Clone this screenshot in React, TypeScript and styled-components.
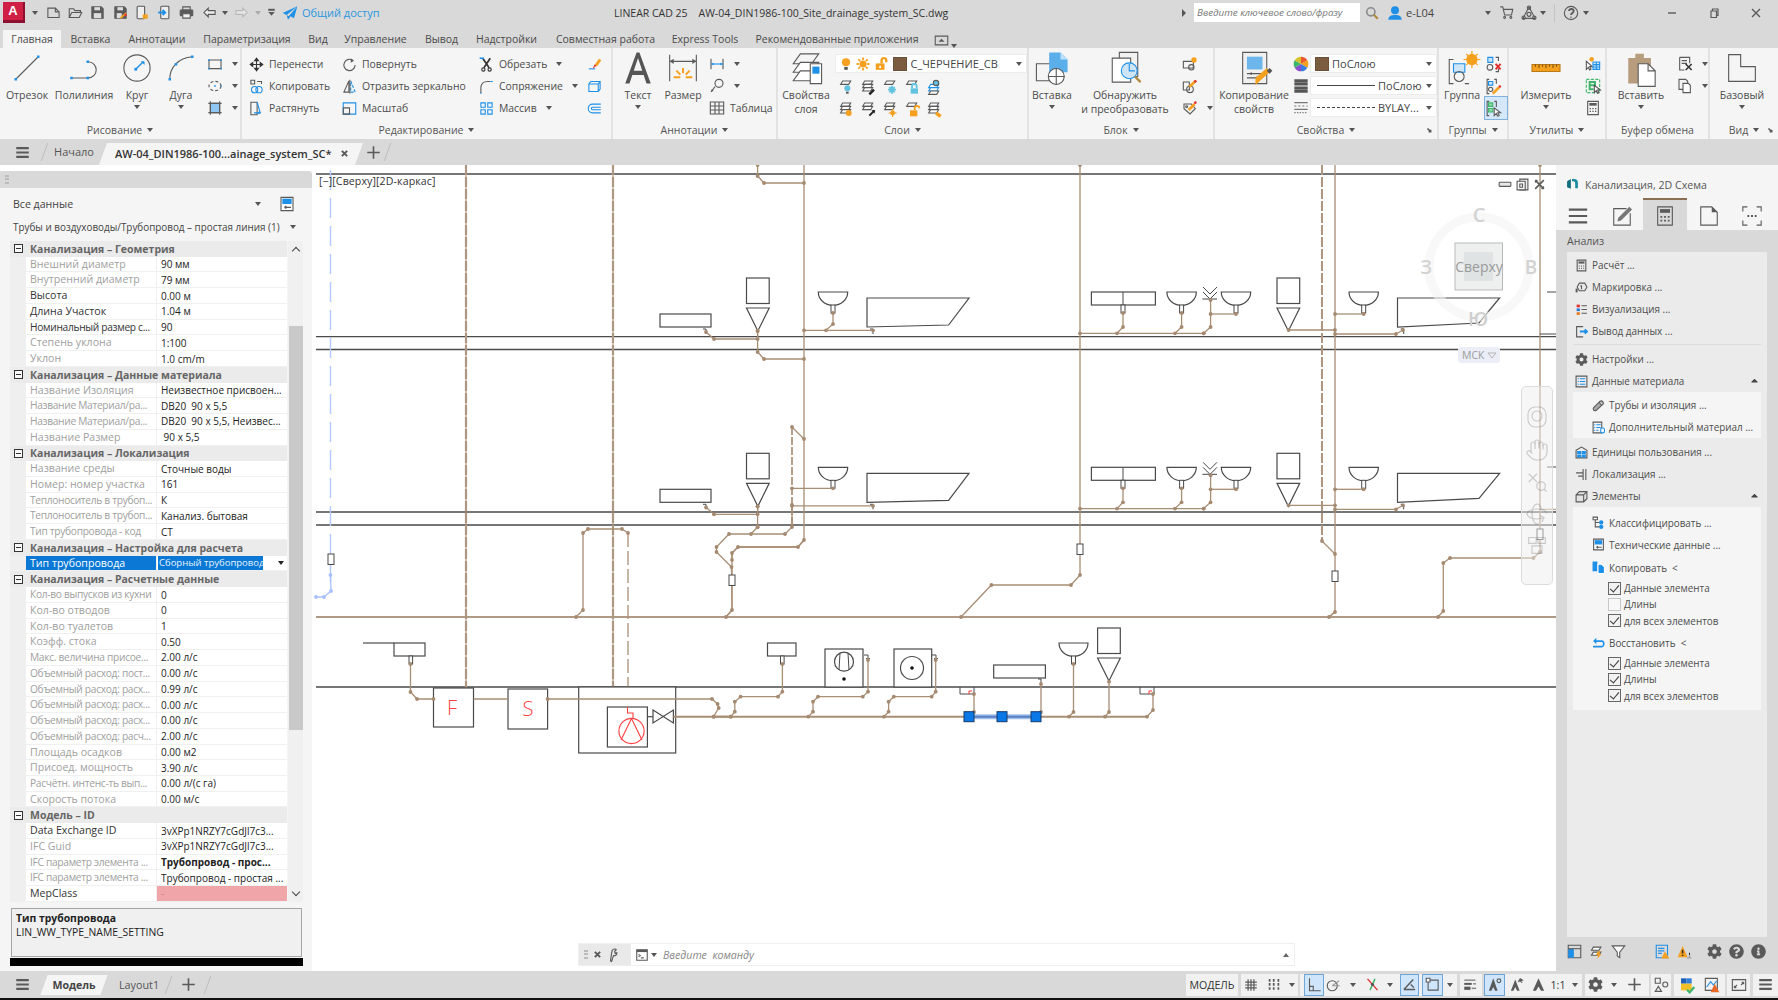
import React from 'react';
import styled, { createGlobalStyle } from 'styled-components';
import { FaCog, FaQuestionCircle, FaInfoCircle, FaCaretUp } from 'react-icons/fa';
import { Hand, Search, Rotate3d } from 'lucide-react';

const GlobalStyle = createGlobalStyle`
  html, body { margin: 0; padding: 0; width: 1778px; height: 1000px; overflow: hidden; background: #fff; }
  #root { width: 1778px; height: 1000px; }
  * { box-sizing: border-box; }
`;

const G = '#5a5a5a', B = '#1e90e8', O = '#f5a01e', LB = '#62c3e0', R = '#e03030', BR = '#a88e74', GN = '#3fb56a';
const sq = (x: number, y: number, c = B, s = 2.4) => <rect x={x - s / 2} y={y - s / 2} width={s} height={s} fill={c} stroke="none" />;
const layer = (y: number, c = G) => <path d={`M7 ${y}h12l-3 5H4z`} stroke={c} fill="#fff" />;

const icons: Record<string, React.ReactNode> = {
  new: <path d="M3 5h12l6 6v9H3z M15 5v6h6" />,
  open: <path d="M2 20V6h7l2 3h9v3 M2 20l4-8h16l-4 8z" />,
  save: <><path d="M3 3h15l3 3v15H3z" fill={G} /><rect x="7" y="3.5" width="9" height="5" fill="#ddd" stroke="none" /><rect x="6" y="13" width="12" height="8" fill="#ddd" stroke="none" /></>,
  saveas: <><path d="M3 3h15l3 3v15H3z" fill={G} /><rect x="7" y="3.5" width="9" height="5" fill="#ddd" stroke="none" /><rect x="6" y="13" width="8" height="8" fill="#ddd" stroke="none" /><path d="M13 22l9-8-2-2-9 8z" fill={O} stroke="none" /><circle cx="20" cy="16" r="2" fill={R} stroke="none" /></>,
  phone: <><rect x="5" y="2" width="12" height="20" rx="1.5" fill="#eee" /><path d="M14 15h8v7h-8z" fill={O} stroke="none" /></>,
  phonein: <><rect x="6" y="2" width="13" height="20" rx="1.5" fill="#eee" /><path d="M2 12h11m-4-4l4 4-4 4" stroke={B} strokeWidth="2" /></>,
  print: <><rect x="6" y="3" width="12" height="5" /><rect x="2" y="8" width="20" height="9" rx="1" fill={G} /><rect x="6" y="14" width="12" height="7" fill="#eee" /></>,
  undo: <path d="M10 5L3 12l7 7v-4h11V9H10z" fill="#eee" />,
  redo: <path d="M14 5l7 7-7 7v-4H3V9h11z" fill="#e6e6e6" stroke="#b9b9b9" />,
  caretbar: <><path d="M6 7h12" strokeWidth="2" /><path d="M6 11h12l-6 7z" fill={G} stroke="none" /></>,
  plane: <path d="M23 2L1 12l6 3 2 7 4-5 5 3z M7 15L23 2 10 17z" fill={B} stroke="none" />,
  search: <><circle cx="10" cy="10" r="7" stroke="#8a8a8a" strokeWidth="1.6" /><path d="M15 15l7 7" stroke="#b08a40" strokeWidth="2.2" /></>,
  user: <><circle cx="12" cy="8" r="6" fill={B} stroke="none" /><path d="M2 22c0-5 4-7 10-7s10 2 10 7z" fill={B} stroke="none" /></>,
  cart: <><path d="M2 3h4l3 13h11l2-9H7" /><circle cx="9" cy="20" r="1.5" /><circle cx="19" cy="20" r="1.5" /></>,
  a360: <><path d="M12 3L3 20h18z" /><circle cx="12" cy="4" r="2.5" /><circle cx="4" cy="19" r="2.5" /><circle cx="20" cy="19" r="2.5" /><circle cx="12" cy="14" r="3" /></>,
  help: <><circle cx="12" cy="12" r="10" /><path d="M9 9c0-4 7-4 7 0 0 3-4 3-4 6 M12 17.5v1.5" strokeWidth="1.8" /></>,
  winmin: <path d="M4 12h16" strokeWidth="1.4" />,
  winres: <path d="M6 8h11v13H6z M9 8V4h11v13h-3" strokeWidth="1.2" />,
  winclose: <path d="M4 4l16 16M20 4L4 20" strokeWidth="1.4" />,
  cvmin: <rect x="2" y="9" width="20" height="7" rx="1" fill="#e8e8e8" />,
  cvres: <><rect x="7" y="2" width="15" height="20" fill="#eee" /><rect x="2" y="6" width="15" height="16" fill="#f5f5f5" /><rect x="7" y="11" width="5" height="6" /></>,
  cvclose: <path d="M4 4l16 16M20 4L4 20M4 8l4-4M16 20l4-4" strokeWidth="1.6" />,
  tabbox: <><rect x="2" y="5" width="20" height="14" /><path d="M7 14l5-5 5 5z" fill={G} stroke="none" /></>,
  line: <><path d="M3 21L21 3" />{sq(3, 21, B, 2)}{sq(21, 3, B, 2)}</>,
  pline: <><path d="M2 20H15C24 20 24 7 15 7" />{sq(2, 20, B, 2)}{sq(15, 20, B, 2)}{sq(15, 7, B, 2)}</>,
  circ: <><circle cx="12" cy="12" r="10.5" /><path d="M11 13l6-6" stroke={B} strokeWidth="1.4" />{sq(11, 13, B, 2.2)}<path d="M15 6.5h3v3z" fill={B} stroke="none" /></>,
  arc: <><path d="M3 21C3 11 10 4 21 3" />{sq(3, 21, B, 2)}{sq(8, 9, B, 2)}{sq(21, 3, B, 2)}</>,
  rect: <><rect x="3" y="6" width="18" height="13" />{sq(3, 6, B)}{sq(21, 6, B)}{sq(21, 19, B)}{sq(3, 19, B)}</>,
  ellipse: <><ellipse cx="12" cy="12" rx="9" ry="7" strokeDasharray="3 2" />{sq(12, 12, B, 2.4)}{sq(21, 12, B, 2)}</>,
  hatch: <><rect x="5" y="5" width="14" height="14" fill="#8fc6f2" /><path d="M5 2v20M19 2v20M2 5h20M2 19h20" /></>,
  move: <path d="M12 2v20M2 12h20M12 2l-3 4h6zM12 22l-3-4h6zM2 12l4-3v6zM22 12l-4-3v6z" fill="#333" stroke="#333" />,
  rotate: <><path d="M18 6a9 9 0 1 0 3 7" /><path d="M14 2l5 4-5 3z" fill={G} stroke="none" /></>,
  copy: <><rect x="3" y="2" width="6" height="6" /><path d="M13 4h7v4" /><circle cx="9" cy="17" r="5" stroke={B} /><circle cx="16" cy="17" r="5" stroke={B} /></>,
  mirror: <><path d="M11 3v18H3z" /><path d="M14 3l7 18h-7z" strokeDasharray="3 1.5" stroke={B} /><path d="M12.5 1v22" /></>,
  stretch: <><path d="M3 2h10v20H3z" /><path d="M13 2l5 17H8" stroke={B} /><path d="M14 21l5-2-3-3z" fill={B} stroke="none" /></>,
  scale: <><rect x="2" y="3" width="20" height="18" stroke={B} /><rect x="2" y="11" width="10" height="10" /></>,
  trim: <><path d="M6 2l10 15M18 2L8 17" strokeWidth="1.8" stroke="#333" /><circle cx="7" cy="20" r="2.6" stroke="#333" /><circle cx="17" cy="20" r="2.6" stroke="#333" /><path d="M1 2h7" stroke={B} strokeWidth="1.6" /></>,
  fillet: <><path d="M3 23v-9C3 8 7 4 14 4h4" /><path d="M18 4h4M3 23v-2" stroke={B} /></>,
  array: <><rect x="3" y="3" width="7" height="7" stroke={B} /><rect x="14" y="3" width="7" height="7" stroke={B} /><rect x="3" y="14" width="7" height="7" stroke={B} /><rect x="14" y="14" width="7" height="7" stroke={B} /></>,
  erase: <><path d="M14 14l7-10" stroke={O} strokeWidth="3" /><path d="M3 19h10" stroke={B} /><path d="M9 19l6-5-3-2z" fill={R} stroke="none" /></>,
  cube3: <path d="M3 8l3-4h15v12l-3 4H3z M3 8h15v12 M18 8l3-4" stroke={B} />,
  offset: <path d="M22 5H9a7 7 0 0 0 0 14h13 M22 10H9a2 2 0 0 0 0 4h13" stroke={B} />,
  text: <path d="M3 23L11 1h2l8 22h-3l-2-6H8l-2 6z M9 14h6l-3-9z" fill="#555" stroke="none" />,
  dim: <><path d="M2 2v20M22 2v20M2 7h20" /><path d="M2 7l3-2v4zM22 7l-3-2v4z" fill={G} stroke="none" /><path d="M12 12v4M7 14l3 3M17 14l-3 3M5 19h5M14 19h5" stroke={O} strokeWidth="2" /></>,
  dimlin: <><path d="M3 4v16M21 4v16" /><path d="M3 12h18" stroke={B} /><path d="M3 12l4-2v4zM21 12l-4-2v4z" fill={B} stroke="none" /></>,
  leader: <><path d="M3 21l6-8" /><path d="M3 21l1-4 3 2z" fill={G} stroke="none" /><circle cx="15" cy="8" r="6" /></>,
  table: <><rect x="2" y="3" width="20" height="18" /><path d="M2 9h20M2 15h20M9 3v18M15 3v18" /></>,
  layerprops: <><path d="M8 2h13l-5 7H3z" /><path d="M8 8h13l-5 7H3z" fill="#fff" /><path d="M8 14h13l-5 7H3z" fill="#fff" /><rect x="15" y="9" width="8" height="14" fill="#fff" stroke={G} /><rect x="16.5" y="11" width="5" height="5" fill={B} stroke="none" /></>,
  bulb: <><circle cx="12" cy="9" r="7" fill={O} stroke="none" /><rect x="9" y="17" width="6" height="5" fill={G} stroke="none" /></>,
  sun: <><circle cx="12" cy="12" r="6" fill={O} stroke="none" /><path d="M12 1v4M12 19v4M1 12h4M19 12h4M4 4l3 3M17 17l3 3M4 20l3-3M17 7l3-3" stroke={O} strokeWidth="1.8" /></>,
  lockopen: <><rect x="3" y="11" width="15" height="11" fill={O} stroke="none" /><path d="M13 11V6a4 4 0 0 1 8 0v3" stroke={O} strokeWidth="2.4" /><rect x="9" y="15" width="3" height="4" fill="#fff" stroke="none" /></>,
  l1: <>{layer(3)}<circle cx="14" cy="14" r="4.5" fill={LB} stroke="none" /><rect x="12" y="19" width="4" height="3" fill={G} stroke="none" /></>,
  l2: <>{layer(3)}{layer(8)}{layer(13)}<path d="M14 23l7-7" stroke="#222" strokeWidth="2.4" /></>,
  l3: <>{layer(3)}<path d="M15 10v12M9 16h12M11 12l8 8M19 12l-8 8" stroke={LB} strokeWidth="1.8" /></>,
  l4: <>{layer(3)}<rect x="10" y="14" width="11" height="8" fill={LB} stroke="none" /><path d="M12 14v-3a3.5 3.5 0 0 1 7 0v3" stroke={LB} strokeWidth="1.8" /></>,
  l5: <>{layer(8, B)}{layer(13, B)}{layer(18, G)}<circle cx="15" cy="6" r="4" fill={LB} stroke={G} /></>,
  l6: <>{layer(3)}{layer(8)}{layer(13)}<circle cx="16" cy="18" r="4.5" fill={O} stroke="none" /></>,
  l7: <>{layer(3)}{layer(8)}<path d="M14 22l8-8" stroke="#222" strokeWidth="2" /><path d="M22 14v5l-5-5z" fill="#222" stroke="none" /></>,
  l8: <>{layer(3)}{layer(8)}<circle cx="16" cy="18" r="3.6" fill={O} stroke="none" /><path d="M16 12v12M10 18h12" stroke={O} /></>,
  l9: <>{layer(3)}<rect x="9" y="14" width="11" height="9" fill={O} stroke="none" /><path d="M16 14v-3a3.5 3.5 0 0 1 7 0" stroke={O} strokeWidth="1.8" /></>,
  l10: <>{layer(3)}{layer(8)}{layer(13)}<path d="M15 18l7 5" stroke={O} strokeWidth="3.4" /></>,
  insert: <><rect x="1" y="9" width="17" height="12" /><path d="M10 1h8l5 5v9H10z" fill="#5aaeea" stroke="none" /><path d="M18 1l5 5h-5z" fill="#bde0fa" stroke="none" /><circle cx="15" cy="18" r="5.6" fill="#fff" /><path d="M15 12v12M9.5 18H21" /></>,
  detect: <><path d="M8 1h13v17H8z" fill="#f2f2f2" /><path d="M3 5h13v17H3z" fill="#fff" /><circle cx="15" cy="14" r="5.6" fill="#cfe6f9" stroke={B} /><path d="M15 9v5h4" stroke={B} /><path d="M19 18l4 4" stroke="#b08a40" strokeWidth="2.4" /></>,
  bl1: <><rect x="2" y="8" width="15" height="10" /><circle cx="14" cy="17" r="4" /><circle cx="18" cy="6" r="4" fill={O} stroke="none" /></>,
  bl2: <><path d="M2 6h9v12H2z" /><circle cx="12" cy="17" r="5" /><path d="M11 13l9-8" stroke={O} strokeWidth="2.6" /><circle cx="20" cy="5" r="2" fill={R} stroke="none" /></>,
  bl3: <><path d="M3 6h11l6 7-8 8-9-8z" /><circle cx="7" cy="10" r="1.4" /><path d="M10 15l9-9" stroke={O} strokeWidth="2.6" /><circle cx="20" cy="4" r="2" fill={R} stroke="none" /></>,
  match: <><rect x="4" y="1" width="17" height="22" fill="#f0f0f0" /><rect x="7" y="4" width="11" height="9" fill="#6cb6ec" stroke="none" /><path d="M7 16h10M7 19h10M10 15v2M14 18v2" /><path d="M13 24l10-9-2-3-8 7z" fill={O} stroke="none" /><path d="M22 13l2 2" stroke="#555" strokeWidth="4" /></>,
  palette: <><path d="M12 12V1a11 11 0 0 1 9.5 5.5z" fill="#e8572d" stroke="none" /><path d="M12 12l9.5-5.5A11 11 0 0 1 21.5 17.5z" fill="#f5a01e" stroke="none" /><path d="M12 12l9.5 5.5A11 11 0 0 1 12 23z" fill="#3b7be0" stroke="none" /><path d="M12 12v11A11 11 0 0 1 2.5 17.5z" fill="#8a4dd0" stroke="none" /><path d="M12 12L2.5 17.5a11 11 0 0 1 0-11z" fill="#3fb56a" stroke="none" /><path d="M12 12L2.5 6.5A11 11 0 0 1 12 1z" fill="#d6c22a" stroke="none" /></>,
  lw: <path d="M2 4h20M2 9h20M2 15h20M2 20h20" strokeWidth="3" stroke="#555" />,
  lt: <path d="M2 4h20M2 9h3m3 0h3m3 0h3m3 0h2M2 14h20M2 19h2m2 0h2m2 0h2m2 0h2m2 0h2" stroke="#777" />,
  group: <><path d="M6 6H3v17h3 M14 6h3M14 23h3" /><rect x="6" y="9" width="8" height="6" stroke={B} fill="#cfe6f9" /><circle cx="10" cy="18" r="3.5" /><circle cx="19" cy="6" r="4" fill={O} stroke="none" /><path d="M19 0v12M13 6h12M15 2l8 8M23 2l-8 8" stroke={O} strokeWidth="1.2" /></>,
  g1: <><rect x="4" y="2" width="7" height="7" fill="#cfe6f9" stroke={B} /><circle cx="7" cy="16" r="4" /><path d="M15 2h4v5M15 22h4v-4" /><path d="M15 11l7 8M22 11l-7 8" stroke={R} strokeWidth="2" /></>,
  g2: <><path d="M6 2H3v20h3M13 2h3v6" /><rect x="5" y="5" width="6" height="5" fill="#cfe6f9" stroke={B} /><circle cx="8" cy="16" r="3" /><path d="M11 22l9-9" stroke={O} strokeWidth="2.6" /><circle cx="21" cy="12" r="1.8" fill={R} stroke="none" /></>,
  g3: <><path d="M6 2H3v20h3M13 2h3v8" /><rect x="5" y="4" width="6" height="5" fill="#8fd8a8" stroke={GN} /><rect x="5" y="12" width="6" height="5" fill="#8fd8a8" stroke={GN} /><path d="M13 11v11l3-3 2 4 2-1-2-4h4z" fill="#fff" /></>,
  ruler: <><rect x="0" y="9" width="24" height="6" fill="#f5a01e" stroke="#b87a14" /><path d="M3 9v2M6 9v3M9 9v2M12 9v3M15 9v2M18 9v3M21 9v2" stroke="#7a5214" /></>,
  u1: <><path d="M2 8v12l3-3 2 4 2-1-2-4h4z" fill="#fff" /><rect x="12" y="9" width="10" height="11" fill="#cfe6f9" stroke={B} /><path d="M12 13h10M12 16.5h10M17 9v11" stroke={B} /><circle cx="10" cy="5" r="3.4" fill={O} stroke="none" /></>,
  u2: <><rect x="2" y="2" width="20" height="20" stroke={GN} strokeDasharray="3 1.5" /><path d="M7 6h8v5H7z M7 11v6h6" stroke={GN} strokeWidth="2" /><path d="M14 11v11l3-3 2 4 2-1-2-4h4z" fill="#fff" /></>,
  calc: <><rect x="4" y="2" width="16" height="20" /><rect x="6.5" y="4.5" width="11" height="4" fill={G} stroke="none" /><path d="M7 12h2v2H7zM11 12h2v2h-2zM15 12h2v2h-2zM7 16h2v2H7zM11 16h2v2h-2zM15 16h2v2h-2z" fill={G} stroke="none" /></>,
  paste: <><path d="M3 5h5V2h6v3h5v18H3z" fill="#b79c7d" stroke="none" /><path d="M10 9h7l5 5v11H10z" fill="#fff" stroke={G} /><path d="M17 9v5h5" /></>,
  cut: <><path d="M4 2h15v9 M4 2v19h7 M7 7h8M7 11h8" /><path d="M13 12l9 9M22 12l-9 9" stroke="#333" strokeWidth="1.6" /></>,
  pages: <><path d="M3 2h10l3 3v12H3z" /><path d="M9 8h8l3 3v11H9z" fill="#fff" /></>,
  base: <path d="M2 2h9v9h11v11H2z" />,
  corner: <path d="M5 5l11 11M16 9v7H9" strokeWidth="1.6" />,
  file: <><path d="M3 2h12l6 6v14H3z" /><path d="M15 2l6 6h-6z" fill={G} stroke="none" /></>,
  burger: <path d="M2 5h20M2 12h20M2 19h20" strokeWidth="2.2" />,
  edit: <><path d="M17 4H3v18h18V9" /><path d="M7 18l1-4L20 2l3 3L11 17z" fill="#777" stroke="none" /></>,
  dots: <><path d="M2 7V2h5M17 2h5v5M2 17v5h5M17 22h5v-5" /><path d="M7 12h2M11 12h2M15 12h2" strokeWidth="2" /></>,
  brand: <><path d="M2 6l7-4v18l-7-3z" fill="#0f6e7e" stroke="none" /><path d="M11 2h4c5 0 7 3 7 7v10h-5V9c0-2-2-3-6-3z" fill="#1a8ba0" stroke="none" /></>,
  hex: <><path d="M4 11l4-7h10l4 7-4 7H8z" /><path d="M12 8l-2 2M12 8v7" /><path d="M3 14v7" strokeWidth="2" /></>,
  viz: <><path d="M3 3h6v5H3z" fill={R} stroke="none" /><path d="M3 10h6v5H3z" fill="#2979e0" stroke="none" /><path d="M3 17h6v5H3z" fill="#e87a20" stroke="none" /><path d="M12 5h10M12 12h10M12 19h10" /></>,
  export: <><path d="M15 3H3v19h12" /><path d="M9 12h13m-4-4l4 4-4 4" stroke={B} strokeWidth="2" /></>,
  list: <><rect x="2" y="2" width="20" height="20" /><path d="M9 7h10M9 12h10M9 17h10" stroke={B} /><path d="M5 6h2v2H5zM5 11h2v2H5zM5 16h2v2H5z" fill={B} stroke="none" /></>,
  pipe: <path d="M3 16L15 4c4-2 8 3 5 6L8 21c-5 2-7-2-5-5z M15 4c-2 3 1 8 5 6" fill="#aaa" />,
  addmat: <><rect x="2" y="2" width="16" height="20" /><path d="M8 7h8M8 12h8M8 17h4" stroke={B} /><path d="M4 6h2v2H4zM4 11h2v2H4zM4 16h2v2H4z" fill={B} stroke="none" /><rect x="16" y="13" width="7" height="9" rx="3" fill="#fff" stroke={B} /></>,
  units: <><path d="M2 8l10-6 10 6v14H2z" fill="#eee" /><path d="M4 9h7.5v6H4zM12.5 9H20v6h-7.5zM4 16h7.5v5H4zM12.5 16H20v5h-7.5z" fill={B} stroke="none" /></>,
  loc: <path d="M15 2v20M20 2v20M2 9h13M6 15h9" />,
  cube: <path d="M2 9l6-6h14v13l-6 6H2z M2 9h14v13 M16 9l6-6" fill="#e3e3e3" />,
  classify: <><rect x="2" y="2" width="8" height="5" fill="#fff" /><path d="M6 7v13h8M6 12h8" /><circle cx="17" cy="12" r="4" fill={B} stroke="none" /><circle cx="17" cy="20" r="4" fill={B} stroke="none" /></>,
  tech: <><rect x="3" y="2" width="18" height="20" fill="#fff" /><rect x="5" y="4" width="14" height="8" fill={B} stroke="none" /><path d="M8 17h10M8 17l3-2M8 17l3 2" /></>,
  copyb: <><path d="M1 1h9v18H1z" fill={B} stroke="none" /><path d="M11 6h7l5 5v12H11z" fill={B} stroke="#fff" /></>,
  restore: <path d="M8 3L2 9l6 6v-4h10c3 0 3 7 0 7H2v3h16c7 0 7-13 0-13H8z" fill={B} stroke="none" />,
  panelL: <><rect x="2" y="2" width="20" height="20" /><rect x="2" y="8" width="9" height="14" fill={B} stroke="none" /><path d="M2 7.5h20" /></>,
  layersFlash: <>{layer(5)}{layer(13)}<path d="M14 12l-3 6h4l-2 6 7-8h-4l3-5z" fill={O} stroke="none" /></>,
  filter: <path d="M2 3h20l-8 10v9l-4-3v-6z" fill="#fff" />,
  warnlist: <><rect x="2" y="2" width="18" height="20" stroke={B} /><path d="M5 7h10M5 11h10M5 15h6" stroke={B} /><path d="M16 12l7 11H10z" fill={O} stroke="none" /></>,
  warn: <><path d="M9 3l8 18H1z" fill={O} stroke="none" /><path d="M9 9v6M9 17v2" stroke="#333" strokeWidth="1.6" /><path d="M20 14v4M20 20v1" stroke="#333" /><path d="M16 22h7" stroke="#b0b0b0" strokeWidth="2" /></>,
  grid: <path d="M7 2v20M12 2v20M17 2v20M2 7h20M2 12h20M2 17h20" strokeWidth="1.2" />,
  snap: <path d="M3 4h3M10 4h3M18 4h3M3 11h3M10 11h3M18 11h3M3 18h3M10 18h3M18 18h3" strokeWidth="2.6" />,
  ortho: <path d="M4 2v20h18M4 15h6v7" />,
  polar: <><circle cx="10" cy="14" r="8" /><path d="M10 14l11-8M10 14h12" stroke="#999" /></>,
  osnap: <><path d="M4 3l16 18" stroke={R} strokeWidth="1.4" /><path d="M16 3L8 21" stroke={GN} strokeWidth="1.4" /><circle cx="12" cy="12" r="2.5" fill="#555" stroke="none" /></>,
  angle: <path d="M3 20h18M3 20L18 4M14 12l5 5" strokeWidth="1.4" />,
  rectdot: <><rect x="5" y="5" width="16" height="16" /><rect x="2" y="2" width="6" height="6" fill="#fff" /></>,
  lwt: <><path d="M2 5h18" strokeWidth="1" /><path d="M2 11h12" strokeWidth="2" /><path d="M2 18h10" strokeWidth="3.2" /><path d="M16 11h5M14 18h7" strokeWidth="1" /></>,
  anno: <><path d="M10 2L3 22h4l3-6 3 6h4z" fill={G} stroke="none" /><circle cx="19" cy="6" r="3" /></>,
  anno2: <><path d="M10 4L3 22h4l3-6 3 6h4z" fill={G} stroke="none" /><path d="M15 8l3-5 3 2-3 1 3 3" stroke={G} strokeWidth="1.4" /></>,
  anno3: <path d="M12 2L3 22h5l4-7 4 7h5z" fill={G} stroke="none" />,
  gear: <FaCog size={24} />,
  q: <FaQuestionCircle size={24} />,
  info: <FaInfoCircle size={24} />,
  plus: <path d="M12 2v20M2 12h20" strokeWidth="1.6" />,
  iso: <><rect x="2" y="2" width="8" height="8" /><circle cx="18" cy="12" r="4" /><path d="M7 15l5 8H2z" /></>,
  sheetok: <><path d="M3 2h8v8H3z" fill="#1f5fb8" stroke="none" /><path d="M11 2h8v8h-8z" fill="#2f7fd8" stroke="none" /><path d="M3 10h16v10H3z" fill="#f2c029" stroke="none" /><path d="M12 19l4 4 7-8" stroke={GN} strokeWidth="2.2" /></>,
  sheetwarn: <><rect x="2" y="2" width="18" height="18" /><path d="M4 15l6-8 4 5 5-6" stroke={B} /><path d="M16 10l7 13H10z" fill="#e8682a" stroke="none" /></>,
  frame: <><rect x="2" y="4" width="20" height="16" /><path d="M5 16l4-4M5 16h3M5 16v-3M19 8l-4 4M19 8h-3M19 8v3" /></>,
  prompt: <><rect x="3" y="3" width="18" height="18" fill="#fff" /><rect x="3" y="3" width="18" height="4" fill={G} stroke="none" /><path d="M6 11l3 2-3 2M10 17h5" /></>,
  wrench: <path d="M6 22l2-14 1-4c2-3 6-3 7-1l-3 3 1 3 3-1c0 4-3 6-6 5l-3 10z" />,
  xbold: <path d="M5 5l14 14M19 5L5 19" strokeWidth="2" />,
  wheel: <><rect x="3" y="2" width="18" height="20" rx="7" /><circle cx="12" cy="11" r="5" /></>,
  hand: <Hand size={24} strokeWidth={1.2} />,
  zoomx: <><path d="M3 3l9 9M12 3l-9 9" /><Search size={14} x={10} y={10} strokeWidth={1.2} /></>,
  orbit: <Rotate3d size={24} strokeWidth={1.2} />,
  boxes: <><rect x="2" y="3" width="9" height="7" /><rect x="13" y="3" width="9" height="7" /><rect x="6" y="13" width="12" height="9" /></>
};

const IconSvg = styled.svg<{ $c?: string }>`
  display: block;
  flex: none;
  color: ${p => p.$c || G};
  overflow: visible;
  * { vector-effect: non-scaling-stroke; }
`;
const Ic = ({ n, s = 16, c }: { n: string; s?: number; c?: string }) => (
  <IconSvg $c={c} width={s} height={s} viewBox="0 0 24 24" fill="none" stroke={c || G} strokeWidth={1.1}>{icons[n]}</IconSvg>
);

const Caret = styled.span<{ $c?: string }>`
  display: inline-block; flex: none;
  width: 0; height: 0;
  border-left: 3.5px solid transparent; border-right: 3.5px solid transparent;
  border-top: 4px solid ${p => p.$c || '#555'};
`;

const Shell = styled.div`
  width: 1778px; height: 1000px; display: flex; flex-direction: column;
  font-family: "Open Sans", "Noto Sans", sans-serif; font-size: 10.5px; color: #444;
  background: #d9d9d9; overflow: hidden;
`;

/* ---- title ---- */
const TitleBar = styled.header`height: 28px; display: flex; align-items: center; background: #d9d9d9; flex: none; padding-bottom: 3px;`;
const QatGroup = styled.div`width: 614px; display: flex; align-items: center; flex: none;`;
const Logo = styled.div`
  width: 22px; height: 21px; margin: 0 3px; background: #cf1f45; border-bottom: 3px solid #8d1030; border-right: 2px solid #8d1030;
  color: #fff; font: 700 13px/18px "Liberation Sans", sans-serif; text-align: center; flex: none;
`;
const QatSlot = styled.span<{ $w: number }>`width: ${p => p.$w}px; display: flex; justify-content: center; align-items: center; flex: none;`;
const ShareLink = styled.span`color: #2a97df; font-size: 11px; margin-left: 4px; white-space: nowrap;`;
const DocTitle = styled.div`width: 566px; flex: none; font-size: 10.5px; color: #333; white-space: pre;`;
const SearchBox = styled.div`
  width: 166px; height: 19px; background: #fff; margin-left: 6px; flex: none; padding-left: 3px;
  font-style: italic; font-size: 9.8px; line-height: 19px; color: #777; white-space: nowrap; overflow: hidden;
`;
const UserName = styled.span`width: 80px; font-size: 11px; color: #444; flex: none;`;
const VBar = styled.span`width: 1px; height: 18px; background: #c4c4c4; flex: none;`;
const Tri = styled.span`width: 0; height: 0; border-top: 4px solid transparent; border-bottom: 4px solid transparent; border-left: 4px solid #555; flex: none;`;

/* ---- tabs ---- */
const TabRow = styled.nav`height: 20px; display: flex; padding-left: 3px; flex: none; align-items: flex-end;`;
const RibbonTab = styled.span<{ $w: number; $on?: boolean }>`
  width: ${p => p.$w}px; height: ${p => p.$on ? 18 : 20}px; line-height: ${p => p.$on ? 18 : 22}px; text-align: center; font-size: 10.5px; color: #4a4a4a; white-space: nowrap; flex: none;
  background: ${p => p.$on ? '#f5f5f5' : 'transparent'};
`;

/* ---- ribbon ---- */
const Ribbon = styled.div`height: 91px; display: flex; background: #f5f5f5; flex: none;`;
const Panel = styled.section<{ $w: number }>`
  width: ${p => p.$w}px; flex: none; display: flex; flex-direction: column; border-right: 2px solid #e2e2e2; position: relative;
  &:last-child { border-right: none; }
`;
const PanelBody = styled.div`height: 73px; display: flex; flex: none;`;
const PanelFoot = styled.div`
  height: 18px; display: flex; align-items: center; justify-content: center; gap: 5px; color: #555; font-size: 10.5px; position: relative;
`;
const CornerMark = styled.span`position: absolute; right: 4px; top: 6px;`;
const Large = styled.div<{ $w: number }>`
  width: ${p => p.$w}px; flex: none; display: flex; flex-direction: column; align-items: center; color: #4c4c4c; font-size: 10.5px; line-height: 14px; text-align: center; white-space: nowrap;
`;
const LargeIcon = styled.div`height: 40px; display: flex; align-items: center; justify-content: center; flex: none;`;
const LargeCaret = styled(Caret)`margin-top: 3px;`;
const Stack = styled.div<{ $w: number; $pad?: number }>`
  width: ${p => p.$w}px; flex: none; padding: 5px 0 0 ${p => p.$pad ?? 0}px; display: flex; flex-direction: column;
`;
const Small = styled.div<{ $on?: boolean }>`
  height: 22px; display: flex; align-items: center; gap: 5px; white-space: nowrap; color: #4c4c4c; font-size: 10.4px;
  background: ${p => p.$on ? '#d4e8fa' : 'transparent'};
  outline: ${p => p.$on ? '1px solid #7fb2de' : 'none'};
`;
const SmallGapCaret = styled(Caret)<{ $ml?: number }>`margin-left: ${p => p.$ml ?? 4}px;`;
const LayerCol = styled.div`width: 192px; flex: none; margin-left: 1px; padding-top: 6px;`;
const Combo = styled.div<{ $w: number }>`
  width: ${p => p.$w}px; height: 19px; background: #fff; border: 1px solid #ececec; display: flex; align-items: center; padding: 0 4px; gap: 3px; font-size: 11px; color: #444; white-space: nowrap; overflow: hidden; flex: none;
`;
const LayerCombo = styled(Combo)`padding: 0 4px 0 1px; gap: 0;`;
const LayerStateCell = styled.span`width: 17.5px; display: flex; justify-content: center; flex: none;`;
const Swatch = styled.span`width: 14px; height: 14px; background: #7a5c3e; border: 1px solid #6b5136; flex: none;`;
const LayerSwatch = styled(Swatch)`margin: 0 4px 0 3px;`;
const ComboText = styled.span`flex: 1; overflow: hidden; white-space: nowrap;`;
const IconRow = styled.div`display: flex; height: 22px; align-items: center; margin-top: 3px; margin-bottom: -3px;`;
const IconCell = styled.span`width: 22px; display: flex; justify-content: center; flex: none;`;
const PropCol = styled.div`width: 146px; flex: none; padding-top: 6px; display: flex; flex-direction: column; gap: 3px;`;
const PropRowR = styled.div`display: flex; align-items: center; gap: 1px;`;
const LinePreview = styled.span<{ $dash?: boolean }>`
  width: 58px; height: 0; border-top: 1px ${p => p.$dash ? 'dashed' : 'solid'} #444; flex: none; margin-left: 2px;
`;

/* ---- doc tabs ---- */
const DocBar = styled.div`height: 26px; display: flex; align-items: flex-end; background: #d9d9d9; flex: none; color: #555;`;
const BarSlot = styled.span<{ $w: number }>`width: ${p => p.$w}px; height: 100%; display: flex; align-items: center; justify-content: center; flex: none;`;
const SlashMark = styled.span`width: 1px; height: 18px; background: #bdbdbd; transform: skewX(-20deg); flex: none; align-self: center;`;
const StartTab = styled.span`width: 58px; text-align: center; font-size: 11px; color: #555; flex: none; line-height: 26px; height: 100%;`;
const ActiveDoc = styled.div`
  width: 256px; height: 22px; position: relative; display: flex; align-items: center; justify-content: space-between; padding: 0 10px 2px 12px; font-size: 11px; font-weight: 600; color: #333; flex: none; white-space: nowrap;
  &::before { content: ""; position: absolute; inset: 0; background: #f5f5f5; transform: skewX(-20deg); }
  > * { position: relative; }
`;

/* ---- main ---- */
const Main = styled.main`height: 806px; display: flex; flex: none; background: #fff;`;
const LeftPanel = styled.aside`width: 312px; flex: none; margin-top: 6px; display: flex; flex-direction: column; background: #f5f5f5;`;
const DragHead = styled.div`height: 17px; background: #d9d9d9; flex: none; border-radius: 0 4px 0 0; display: flex; align-items: center; padding-left: 5px;`;
const Grip = styled.span`width: 4px; height: 9px; border-left: 2px dotted #bbb; border-right: 2px dotted #bbb; flex: none;`;
const FilterRow = styled.div<{ $h: number; $fs?: number }>`height: ${p => p.$h}px; display: flex; align-items: center; padding-left: 13px; color: #444; font-size: ${p => p.$fs ?? 10.6}px; flex: none; white-space: nowrap;`;
const FilterLabel = styled.span<{ $w: number }>`width: ${p => p.$w}px; flex: none;`;
const FilterIcon = styled.span`margin-left: 18px; display: flex;`;
const GridWrap = styled.div`display: flex; flex: none; margin-left: 10px; height: 661px; width: 292px;`;
const PropGrid = styled.div`width: 277px; flex: none; background: #efefef;`;
const GroupHead = styled.div`height: 15.74px; background: #ebebeb; display: flex; align-items: center; font-weight: 700; font-size: 10.5px; color: #666; white-space: nowrap; padding-left: 4px; gap: 7px;`;
const Toggle = styled.span`width: 9px; height: 9px; border: 1px solid #333; position: relative; flex: none; background: #f8f8f8;
  &::after { content: ""; position: absolute; left: 1px; right: 1px; top: 3px; height: 1px; background: #333; }
`;
const PRow = styled.div`height: 15.74px; display: grid; grid-template-columns: 16px 130px 131px; border-bottom: 1.5px solid #f0f0f0;`;
const PLabel = styled.div<{ $dark?: boolean; $sel?: boolean; $tight?: boolean }>`
  grid-column: 2; background: ${p => p.$sel ? '#0a78d4' : '#fff'}; color: ${p => p.$sel ? '#fff' : p.$dark ? '#333' : '#a0a0a0'};
  padding-left: 4px; font-size: ${p => p.$tight ? 10.2 : 10.6}px; letter-spacing: ${p => p.$tight ? -0.3 : 0}px; line-height: 14px; white-space: nowrap; overflow: hidden;
`;
const PValue = styled.div<{ $bold?: boolean; $bad?: boolean }>`
  grid-column: 3; margin-left: 1px; background: ${p => p.$bad ? '#f0a5a8' : '#fff'}; color: ${p => p.$bad ? '#b88' : '#222'}; padding-left: 4px; font-size: 10px; line-height: 14px; font-weight: ${p => p.$bold ? 700 : 400}; white-space: pre; overflow: hidden; display: flex; align-items: center; justify-content: space-between;
`;
const SelText = styled.span`background: #0a78d4; color: #e8f4ff; margin-left: -3px; padding: 0 1px; flex: none; width: 105px; overflow: hidden; font-size: 9.5px;`;
const SelCaret = styled(Caret)`border-top-color: #222; margin-right: 3px;`;
const ScrollTrack = styled.div`width: 15px; margin-left: 1px; flex: none; position: relative; background: #f0f0f0; display: flex; flex-direction: column; align-items: center; justify-content: space-between; padding: 5px 0;`;
const ScrollThumb = styled.div`position: absolute; left: 1px; right: 0; top: 85px; height: 404px; background: #c9c9c9;`;
const Chevron = styled.span<{ $up?: boolean }>`
  width: 6px; height: 6px; border-left: 1.5px solid #444; border-top: 1.5px solid #444; z-index: 1;
  transform: translateY(${p => p.$up ? 2 : -2}px) rotate(${p => p.$up ? 45 : 225}deg);
`;
const Desc = styled.div`
  width: 291px; height: 49px; margin: 6px 0 0 11px; background: #f0f0f0; border: 1px solid #a5a5a5; flex: none; padding: 3px 4px; font-size: 10.4px; line-height: 13.5px; color: #222; white-space: nowrap;
`;
const DescTitle = styled.div`font-weight: 700;`;
const BlackBar = styled.div`width: 293px; height: 8px; margin: 1px 0 0 10px; background: #000; flex: none;`;

const Canvas = styled.div`flex: 1; position: relative; overflow: hidden; background: #fff;`;
const ViewLabel = styled.div`position: absolute; left: 7px; top: 10px; font-size: 10.6px; line-height: 13px; color: #333; letter-spacing: .1px; white-space: nowrap;`;
const WinCtrls = styled.div`position: absolute; left: 1186px; top: 12px; display: flex; gap: 4px; align-items: center;`;
const CubeBox = styled.div`position: absolute; left: 1105px; top: 40px; width: 124px; height: 160px;`;
const NavBar = styled.div`
  position: absolute; left: 1209px; top: 221px; width: 32px; height: 199px; background: rgba(238,238,238,.5); border: 1.5px solid #dcdcdc; border-radius: 5px;
  display: flex; flex-direction: column; align-items: center; gap: 9px; padding-top: 18px;
`;
const CmdLine = styled.div`position: absolute; left: 266px; top: 778px; width: 717px; height: 23px; background: #fff; border: 1px solid #efefef; display: flex; align-items: center;`;
const CmdHandle = styled.div`width: 52px; height: 100%; background: #e9e9e9; display: flex; align-items: center; gap: 5px; padding-left: 5px; flex: none;`;
const CmdPrompt = styled.div`display: flex; align-items: center; gap: 2px; padding-left: 4px; flex: none;`;
const CmdText = styled.span`font-style: italic; color: #888; font-size: 10.6px; margin-left: 6px; white-space: pre; flex: 1;`;
const CmdUp = styled.span`width: 0; height: 0; border-left: 3px solid transparent; border-right: 3px solid transparent; border-bottom: 4px solid #666; margin-right: 5px;`;

/* ---- right ---- */
const RightPanel = styled.aside`width: 222px; flex: none; display: flex; flex-direction: column; background: #d9d9d9;`;
const RHead = styled.div`height: 65px; background: #f5f5f5; flex: none; display: flex; flex-direction: column;`;
const RTitle = styled.div`height: 33px; display: flex; align-items: center; padding: 6px 0 0 10px; gap: 6px; font-size: 10.6px; color: #555; white-space: nowrap;`;
const RTabs = styled.div`height: 32px; display: flex;`;
const RTab = styled.span<{ $w: number; $on?: boolean }>`
  width: ${p => p.$w}px; flex: none; display: flex; align-items: center; justify-content: center; padding-top: 2px;
  background: ${p => p.$on ? '#d9d9d9' : 'transparent'}; border-top: 2px solid ${p => p.$on ? '#8a6f55' : 'transparent'};
`;
const RBody = styled.div`flex: 1; padding: 0 11px; display: flex; flex-direction: column;`;
const RHeading = styled.div`height: 22px; line-height: 23px; font-size: 10.6px; color: #555;`;
const RBox = styled.div`height: 685px; background: #ebebeb; flex: none; padding: 2px 6px 0; color: #4a4a4a;`;
const RItem = styled.div<{ $sub?: boolean; $gap?: number }>`
  height: 22px; display: flex; align-items: center; gap: 4px; font-size: 9.9px; white-space: pre; color: #4d4d4d; padding-left: ${p => p.$sub ? 19 : 2}px; margin-top: ${p => p.$gap ?? 0}px; position: relative;
`;
const RCollapse = styled.span`position: absolute; right: 1px; top: 5px; color: #444; display: flex;`;
const RSep = styled.div`height: 1px; background: #dcdcdc; margin: 2px 0 3px;`;
const RSub = styled.div<{ $pt: number; $pb: number }>`background: #f5f5f5; padding: ${p => p.$pt}px 0 ${p => p.$pb}px;`;
const RCheck = styled.div<{ $mt?: number }>`height: 16.3px; display: flex; align-items: center; gap: 3px; padding-left: 35px; font-size: 9.9px; color: #4d4d4d; white-space: nowrap; margin-top: ${p => p.$mt ?? 0}px;`;
const CheckBox = styled.span<{ $on?: boolean }>`
  width: 13px; height: 13px; flex: none; border: 1.5px solid #666; background: ${p => p.$on ? '#f2f2f2' : '#f8f8f8'}; border-color: ${p => p.$on ? '#666' : '#c8c8c8'}; position: relative;
  &::after { content: ""; display: ${p => p.$on ? 'block' : 'none'}; position: absolute; left: 3px; top: 0; width: 4px; height: 8px; border-right: 1.5px solid #333; border-bottom: 1.5px solid #333; transform: rotate(40deg); }
`;
const RFoot = styled.div`height: 28px; display: flex; align-items: center; flex: none;`;

/* ---- status ---- */
const StatusBar = styled.footer`height: 29px; flex: none; display: flex; border-bottom: 2px solid #111;`;
const ModelTabs = styled.div`width: 1186px; flex: none; display: flex; align-items: center;`;
const ActiveModel = styled.div`
  width: 60px; height: 20px; position: relative; display: flex; align-items: center; justify-content: center; font-weight: 700; font-size: 10.6px; color: #444; flex: none;
  &::before { content: ""; position: absolute; inset: 0; background: #f5f5f5; transform: skewX(-20deg); }
  > * { position: relative; }
`;
const LayoutTab = styled.span`width: 64px; padding-left: 6px; text-align: center; font-size: 10.8px; color: #555; flex: none;`;
const StGroups = styled.div`display: flex; gap: 2.5px; align-items: center;`;
const StGroup = styled.div`height: 22px; background: #f1f1f1; display: flex; align-items: center; flex: none;`;
const StSlot = styled.span<{ $w: number; $on?: boolean }>`
  width: ${p => p.$w}px; height: 22px; flex: none; display: flex; align-items: center; justify-content: center; font-size: 10.6px; color: #333;
  background: ${p => p.$on ? '#cfe5fb' : 'transparent'}; box-shadow: ${p => p.$on ? 'inset 0 0 0 1px #6ea6d9' : 'none'};
`;

/* ---- drawing ---- */
const Drawing = styled.svg`position: absolute; inset: 0; display: block;`;
const L = '#4a4a4a';
const Pipe = ({ p, w = 1.3, c = BR, dots = true }: { p: string; w?: number; c?: string; dots?: boolean }) => {
  const pts = p.trim().split(/\s+/).map(a => a.split(',').map(Number));
  return <g><polyline points={p} fill="none" stroke={c} strokeWidth={w} />{dots && pts.map((q, i) => <circle key={i} cx={q[0]} cy={q[1]} r={1.9} fill={c === BR ? '#a58a70' : c} />)}</g>;
};
const Basin = ({ cx, y = 292, hw = 14.7 }: { cx: number; y?: number; hw?: number }) => (
  <g fill="#fff" stroke={L} strokeWidth="1.2">
    <path d={`M${cx - hw} ${y}h${hw * 2}a${hw} 13.5 0 0 1 -${hw * 2} 0z`} />
    <rect x={cx - 2} y={y + 13} width={4} height={8} strokeWidth="1" />
  </g>
);
const Toilet = ({ x, y = 278 }: { x: number; y?: number }) => (
  <g fill="#fff" stroke={L} strokeWidth="1.2">
    <rect x={x} y={y} width={22.7} height={25.5} />
    <path d={`M${x} ${y + 30}h22.7l-11.35 23z`} />
  </g>
);
const Sym = ({ x, y }: { x: number; y: number }) => <rect x={x - 3} y={y - 5} width={6} height={10.5} fill="#fff" stroke={L} strokeWidth="1" />;
const Tick = ({ x, y }: { x: number; y: number }) => <path d={`M${x} ${y}v5 M${x} ${y}h-3`} stroke={L} fill="none" />;
const Elbow = ({ x }: { x: number }) => <g><path d={`M${x} 687v7h14v-7`} fill="none" stroke={L} /><path d={`M${x + 9} 694v-3h3`} stroke="#f33" fill="none" /></g>;

const Fixtures = () => (
  <g>
    <rect x="660" y="314" width="51" height="13" fill="#fff" stroke={L} strokeWidth="1.2" />
    <Tick x={706} y={329} />
    <Toilet x={746.5} />
    <Basin cx={833} />
    <path d="M867 298H969L948.6 325L867 327z" fill="#fff" stroke={L} strokeWidth="1.2" />
    <Tick x={873} y={329} />
    <rect x="1091.4" y="292" width="64" height="13" fill="#fff" stroke={L} strokeWidth="1.2" />
    <path d="M1123 292v21" stroke={L} />
    <rect x="1121" y="305" width="4" height="8" fill="#fff" stroke={L} />
    <Basin cx={1181.6} />
    <path d="M1203 287l7 7 7-7M1203 292l7 7 7-7M1202.4 299H1217" fill="none" stroke={L} />
    <Basin cx={1236} />
    <Toilet x={1277} />
    <Basin cx={1363.7} />
    <path d="M1397.5 298H1499.6L1479 323L1397.5 327z" fill="#fff" stroke={L} strokeWidth="1.2" />
    <Tick x={1403.7} y={329} />
    <Pipe p="706,332 714,339 757.6,339 757.6,331" />
    <Pipe p="1123,313 1123,327 1117,333.3" />
    <Pipe p="1080,333.3 1203.7,333.3" />
    <Pipe p="1181.6,313 1181.6,327 1175,333.3" />
    <Pipe p="1210.6,300 1210.6,327 1203.7,333.3" />
    <Pipe p="1210.6,314 1236,314" />
    <Pipe p="1288.6,330 1335,330" />
    <Pipe p="1363.7,314 1335,314" />
    <Pipe p="1403,330 1396,334 1335,334" />
  </g>
);
const FloorUpper = () => (
  <g>
    <Pipe p="757.6,165 757.6,176 764,183 804,183" />
    <Pipe p="757.6,331 757.6,352 764,359 804,359" />
    <Pipe p="833,313 833,324 826,330.3" />
    <Pipe p="804,330.3 873,330.3" />
    <path d="M1540 334H1558M1547 292H1556M1547 467H1556" stroke={L} fill="none" />
  </g>
);

const DrainDrawing = () => (
  <Drawing width="1244" height="806" viewBox="312 165 1244 806">
    <g stroke={L} strokeWidth="1.3">
      <path d="M316 174H1556M316 336.7H1556M316 349.5H1556M316 512H1556M316 525H1556M316 687H1556" />
    </g>
    <path d="M316 617H1556" stroke="#b09a85" strokeWidth="2" />
    <path d="M466 165V693M613 165V713" stroke={BR} strokeWidth="1" />
    <path d="M466 165V693M613 165V713" stroke="#ae9780" strokeWidth="2.2" strokeDasharray="10 2" />
    <path d="M330.5 170V591" stroke="#b4c9ff" strokeWidth="1.4" strokeDasharray="20 8" />
    <Pipe p="330.5,575 331,591 324,597 316,597" c="#a9c0ff" />
    <path d="M1322 165V541" stroke="#ae9780" strokeWidth="2" strokeDasharray="10 2" />
    <path d="M792 427V527" stroke="#ae9780" strokeWidth="1.8" strokeDasharray="8 2" />
    <path d="M628 533V707" stroke="#ae9780" strokeWidth="1.4" strokeDasharray="14 4" />
    <Pipe p="804,165 804,540 798,547 738,547 732,553 732,610 726,617" dots={false} />
    <Pipe p="804,540 798,547 738,547 732,553 732,560" />
    <Pipe p="792,427 804,439" />
    <Pipe p="792,505 792,527 785,534 729,534 716.5,547 716.5,552 731.5,567 732,610 726,617" />
    <Pipe p="757.6,527 751,534" />
    <Pipe p="576,617 583,610 583,533 588,529 622,529 628,533" />
    <Pipe p="1080,165 1080,575 1071,585 991.4,585 961,617" />
    <Pipe p="1335,165 1335,554 1335,612 1329,617" dots={false} />
    <Pipe p="1322,541 1335,554" />
    <Pipe p="1335,612 1329,617" />
    <Pipe p="1540,165 1540,552 1533.5,558 1450,558 1443.3,563 1443.3,611 1438,617" />
    <Sym x={331} y={559} />
    <Sym x={732} y={580} />
    <Sym x={1080} y={549} />
    <Sym x={1335} y={576} />
    <Sym x={1540} y={534} />
    <Fixtures />
    <FloorUpper />
    <g transform="translate(0 175.3)">
      <Fixtures />
      <Pipe p="757.6,331 757.6,352" />
      <path d="M1540 334H1558" stroke={BR} fill="none" />
      <Pipe p="833,313 792,313" />
      <Pipe p="792,330.5 873,330.5" />
    </g>
    <g fill="#fff" stroke={L} strokeWidth="1.2">
      <path d="M363 643H394" />
      <rect x="394" y="643" width="31" height="13" />
      <rect x="409" y="656" width="3.6" height="8" strokeWidth="1" />
      <rect x="767.5" y="643" width="28.5" height="13" />
      <rect x="780.5" y="656" width="3.6" height="8" strokeWidth="1" />
      <rect x="433.5" y="688" width="40" height="39" />
      <rect x="508" y="689" width="39.6" height="40" />
      <rect x="578.7" y="687" width="97" height="66" />
      <rect x="607.4" y="707" width="40" height="40" />
      <path d="M653 710L673.4 723V710L653 723z" />
      <path d="M647.5 716.7H653" fill="none" />
      <rect x="825" y="649" width="38" height="38" />
      <ellipse cx="844" cy="661.7" rx="9.5" ry="9.5" />
      <path d="M840 653l-1 17M848 653l1 17" fill="none" strokeWidth="1" />
      <rect x="894" y="649" width="37.7" height="38" />
      <ellipse cx="912" cy="668" rx="11.5" ry="11.5" />
      <rect x="993.7" y="665" width="51.7" height="13" />
      <path d="M864 655h4v5l2-2M868 660l-2-2M932 655h4v5l2-2M936 660l-2-2" fill="none" strokeWidth="1" />
    </g>
    <circle cx="844" cy="679" r="1.8" fill="#111" />
    <circle cx="912" cy="668" r="1.8" fill="#111" />
    <Basin cx={1073.5} y={643} hw={14.5} />
    <Toilet x={1097.6} y={628} />
    <Tick x={1041} y={679} />
    <Elbow x={960} />
    <Elbow x={1140} />
    <g fill="none" stroke="#ff4040" strokeWidth="1.1">
      <path d="M627.5 707V713H633V719" />
      <ellipse cx="631.5" cy="731" rx="12.6" ry="12.6" />
      <path d="M631.5 718.5L621 740M631.5 718.5L642 740" />
    </g>
    <text x="452" y="715" textAnchor="middle" fontFamily="Open Sans, sans-serif" fontWeight="300" fontSize="20" fill="#ff4040">F</text>
    <text x="528" y="716" textAnchor="middle" fontFamily="Open Sans, sans-serif" fontWeight="300" fontSize="20" fill="#ff4040">S</text>
    <Pipe p="410.5,664 410.5,692 417,699 433.5,699" />
    <path d="M473.6 699H508" stroke={BR} strokeWidth="1.3" />
    <Pipe p="547.6,699 712,699 717.6,704 718.7,708 713.6,716.7" />
    <Pipe p="673.4,716.7 1147,716.7" w={2} dots={false} />
    <Pipe p="713.6,716.7 730.8,716.7" w={2} />
    <Pipe p="730.8,716.7 734.8,711.7 734.8,701.7 740.6,696.7 778,696.7 782.4,691.7 782.4,664" />
    <Pipe p="808.3,716.7 813,711.7 813,701.7 818,696.7 862.8,696.7 868,691.7 868,660" />
    <Pipe p="884,716.7 888.6,711.7 888.6,701.7 893.8,696.7 931.7,696.7 935.7,691.7 935.7,660" />
    <Pipe p="974,694 974,712 969,716.7" />
    <Pipe p="1041,684 1041,712 1036,716.7" />
    <Pipe p="1073.5,664 1073.5,712 1069,716.7" />
    <Pipe p="1109,681.7 1109,712 1105,716.7" />
    <Pipe p="1153,694 1153,710 1147,716.7" />
    <path d="M969 716.7H1036" stroke="#9fc0ee" strokeWidth="5" />
    <path d="M969 716.7H1036" stroke="#5a7fc0" strokeWidth="2" />
    <g fill="#0a78e6" stroke="#123a6a" strokeWidth="1">
      <rect x="964" y="711.7" width="10" height="10" />
      <rect x="997" y="711.7" width="10" height="10" />
      <rect x="1031" y="711.7" width="10" height="10" />
    </g>
  </Drawing>
);

const ViewCube = () => (
  <CubeBox>
    <svg width="124" height="160" viewBox="1417 205 124 160" fontFamily="Open Sans, sans-serif">
      <circle cx="1479" cy="267" r="50" fill="none" stroke="#f4f4f4" strokeWidth="9" opacity=".6" />
      <rect x="1455" y="243" width="47.5" height="47" fill="#eef0f0" stroke="#b9b9b9" />
      <rect x="1464" y="252" width="29" height="29" fill="#dfe3e3" />
      <text x="1479" y="271.5" textAnchor="middle" fontSize="14" fill="#9a9a9a">Сверху</text>
      <text x="1479" y="222" textAnchor="middle" fontSize="20" fontWeight="600" fill="#d2d2d2">С</text>
      <text x="1531" y="274" textAnchor="middle" fontSize="19" fontWeight="600" fill="#d2d2d2">В</text>
      <text x="1426" y="274" textAnchor="middle" fontSize="19" fontWeight="600" fill="#d2d2d2">З</text>
      <text x="1478" y="326" textAnchor="middle" fontSize="19" fontWeight="600" fill="#cfcfcf">Ю</text>
      <rect x="1458" y="347" width="42" height="16" rx="3" fill="#eceef7" />
      <text x="1462" y="359" fontSize="10.5" fill="#9a9a9a">МСК</text>
      <path d="M1488 353h8l-4 5z" fill="none" stroke="#b5b5b5" />
    </svg>
  </CubeBox>
);

const Faint = styled.span`opacity: .28; display: flex;`;

const Ribbons = () => (
  <Ribbon>
    <Panel $w={242}>
      <PanelBody>
        <Large $w={54}><LargeIcon><Ic n="line" s={30} /></LargeIcon>Отрезок</Large>
        <Large $w={60}><LargeIcon><Ic n="pline" s={30} /></LargeIcon>Полилиния</Large>
        <Large $w={46}><LargeIcon><Ic n="circ" s={30} /></LargeIcon>Круг<LargeCaret /></Large>
        <Large $w={42}><LargeIcon><Ic n="arc" s={30} /></LargeIcon>Дуга<LargeCaret /></Large>
        <Stack $w={38} $pad={5}>
          <Small><Ic n="rect" s={16} /><SmallGapCaret /></Small>
          <Small><Ic n="ellipse" s={16} /><SmallGapCaret /></Small>
          <Small><Ic n="hatch" s={16} /><SmallGapCaret /></Small>
        </Stack>
      </PanelBody>
      <PanelFoot>Рисование<Caret /></PanelFoot>
    </Panel>
    <Panel $w={371}>
      <PanelBody>
        <Stack $w={100} $pad={7}>
          <Small><Ic n="move" s={15} />Перенести</Small>
          <Small><Ic n="copy" s={15} />Копировать</Small>
          <Small><Ic n="stretch" s={15} />Растянуть</Small>
        </Stack>
        <Stack $w={137}>
          <Small><Ic n="rotate" s={15} />Повернуть</Small>
          <Small><Ic n="mirror" s={15} />Отразить зеркально</Small>
          <Small><Ic n="scale" s={15} />Масштаб</Small>
        </Stack>
        <Stack $w={108}>
          <Small><Ic n="trim" s={15} />Обрезать<SmallGapCaret $ml={4} /></Small>
          <Small><Ic n="fillet" s={15} />Сопряжение<SmallGapCaret $ml={4} /></Small>
          <Small><Ic n="array" s={15} />Массив<SmallGapCaret $ml={4} /></Small>
        </Stack>
        <Stack $w={24}>
          <Small><Ic n="erase" s={15} /></Small>
          <Small><Ic n="cube3" s={15} /></Small>
          <Small><Ic n="offset" s={15} /></Small>
        </Stack>
      </PanelBody>
      <PanelFoot>Редактирование<Caret /></PanelFoot>
    </Panel>
    <Panel $w={165}>
      <PanelBody>
        <Large $w={50}><LargeIcon><Ic n="text" s={34} /></LargeIcon>Текст<LargeCaret /></Large>
        <Large $w={40}><LargeIcon><Ic n="dim" s={32} /></LargeIcon>Размер</Large>
        <Stack $w={70} $pad={6}>
          <Small><Ic n="dimlin" s={16} /><SmallGapCaret /></Small>
          <Small><Ic n="leader" s={16} /><SmallGapCaret /></Small>
          <Small><Ic n="table" s={16} />Таблица</Small>
        </Stack>
      </PanelBody>
      <PanelFoot>Аннотации<Caret /></PanelFoot>
    </Panel>
    <Panel $w={251}>
      <PanelBody>
        <Large $w={56}><LargeIcon><Ic n="layerprops" s={34} /></LargeIcon>Свойства<br />слоя</Large>
        <LayerCol>
          <LayerCombo $w={192}>
            <LayerStateCell><Ic n="bulb" s={14} /></LayerStateCell>
            <LayerStateCell><Ic n="sun" s={14} /></LayerStateCell>
            <LayerStateCell><Ic n="lockopen" s={14} /></LayerStateCell>
            <LayerSwatch />
            <ComboText>С_ЧЕРЧЕНИЕ_СВ</ComboText>
            <Caret />
          </LayerCombo>
          <IconRow>{['l1', 'l2', 'l3', 'l4', 'l5'].map(n => <IconCell key={n}><Ic n={n} s={16} /></IconCell>)}</IconRow>
          <IconRow>{['l6', 'l7', 'l8', 'l9', 'l10'].map(n => <IconCell key={n}><Ic n={n} s={16} /></IconCell>)}</IconRow>
        </LayerCol>
      </PanelBody>
      <PanelFoot>Слои<Caret /></PanelFoot>
    </Panel>
    <Panel $w={186}>
      <PanelBody>
        <Large $w={46}><LargeIcon><Ic n="insert" s={34} /></LargeIcon>Вставка<LargeCaret /></Large>
        <Large $w={100}><LargeIcon><Ic n="detect" s={34} /></LargeIcon>Обнаружить<br />и преобразовать</Large>
        <Stack $w={38} $pad={7}>
          <Small><Ic n="bl1" s={16} /></Small>
          <Small><Ic n="bl2" s={16} /></Small>
          <Small><Ic n="bl3" s={16} /><SmallGapCaret /></Small>
        </Stack>
      </PanelBody>
      <PanelFoot>Блок<Caret /></PanelFoot>
    </Panel>
    <Panel $w={224}>
      <PanelBody>
        <Large $w={78}><LargeIcon><Ic n="match" s={34} /></LargeIcon>Копирование<br />свойств</Large>
        <PropCol>
          <PropRowR><Ic n="palette" s={16} /><Combo $w={127}><Swatch /><ComboText>ПоСлою</ComboText><Caret /></Combo></PropRowR>
          <PropRowR><Ic n="lw" s={16} /><Combo $w={127}><LinePreview /><ComboText>ПоСлою</ComboText><Caret /></Combo></PropRowR>
          <PropRowR><Ic n="lt" s={16} /><Combo $w={127}><LinePreview $dash /><ComboText>BYLAY...</ComboText><Caret /></Combo></PropRowR>
        </PropCol>
      </PanelBody>
      <PanelFoot>Свойства<Caret /><CornerMark><Ic n="corner" s={7} /></CornerMark></PanelFoot>
    </Panel>
    <Panel $w={70}>
      <PanelBody>
        <Large $w={46}><LargeIcon><Ic n="group" s={34} /></LargeIcon>Группа</Large>
        <Stack $w={22}>
          <Small><Ic n="g1" s={17} /></Small>
          <Small><Ic n="g2" s={17} /></Small>
          <Small $on><Ic n="g3" s={17} /></Small>
        </Stack>
      </PanelBody>
      <PanelFoot>Группы<Caret /></PanelFoot>
    </Panel>
    <Panel $w={98}>
      <PanelBody>
        <Large $w={74}><LargeIcon><Ic n="ruler" s={28} /></LargeIcon>Измерить<LargeCaret /></Large>
        <Stack $w={22} $pad={2}>
          <Small><Ic n="u1" s={16} /></Small>
          <Small><Ic n="u2" s={16} /></Small>
          <Small><Ic n="calc" s={16} /></Small>
        </Stack>
      </PanelBody>
      <PanelFoot>Утилиты<Caret /></PanelFoot>
    </Panel>
    <Panel $w={103}>
      <PanelBody>
        <Large $w={68}><LargeIcon><Ic n="paste" s={34} /></LargeIcon>Вставить<LargeCaret /></Large>
        <Stack $w={34} $pad={2}>
          <Small><Ic n="cut" s={16} /><SmallGapCaret /></Small>
          <Small><Ic n="pages" s={16} /><SmallGapCaret /></Small>
        </Stack>
      </PanelBody>
      <PanelFoot>Буфер обмена</PanelFoot>
    </Panel>
    <Panel $w={68}>
      <PanelBody>
        <Large $w={64}><LargeIcon><Ic n="base" s={32} /></LargeIcon>Базовый<LargeCaret /></Large>
      </PanelBody>
      <PanelFoot>Вид<Caret /><CornerMark><Ic n="corner" s={7} /></CornerMark></PanelFoot>
    </Panel>
  </Ribbon>
);

const QAT: [string, number][] = [['new', 22], ['open', 22], ['save', 22], ['saveas', 24], ['phone', 18], ['phonein', 28], ['print', 16], ['undo', 30]];
const TABS: [string, number][] = [['Главная', 58], ['Вставка', 59], ['Аннотации', 74], ['Параметризация', 106], ['Вид', 36], ['Управление', 79], ['Вывод', 53], ['Надстройки', 77], ['Совместная работа', 121], ['Express Tools', 78], ['Рекомендованные приложения', 186]];

type Row = [string, string, number?];
const GROUPS: { t: string; rows: Row[] }[] = [
  { t: 'Канализация – Геометрия', rows: [['Внешний диаметр', '90 мм'], ['Внутренний диаметр', '79 мм'], ['Высота', '0.00 м', 1], ['Длина Участок', '1.04 м', 1], ['Номинальный размер с...', '90', 1], ['Степень уклона', '1:100'], ['Уклон', '1.0 cm/m']] },
  { t: 'Канализация – Данные материала', rows: [['Название Изоляция', 'Неизвестное присвоен...'], ['Название Материал/ра...', 'DB20  90 x 5,5'], ['Название Материал/ра...', 'DB20  90 x 5,5, Неизвес...'], ['Название Размер', ' 90 x 5,5']] },
  { t: 'Канализация – Локализация', rows: [['Название среды', 'Сточные воды'], ['Номер: номер участка', '161'], ['Теплоноситель в трубоп...', 'К'], ['Теплоноситель в трубоп...', 'Канализ. бытовая'], ['Тип трубопровода - код', 'СТ']] },
  { t: 'Канализация – Настройка для расчета', rows: [['Тип трубопровода', 'Сборный трубопровод', 2]] },
  { t: 'Канализация – Расчетные данные', rows: [['Кол-во выпусков из кухни', '0'], ['Кол-во отводов', '0'], ['Кол-во туалетов', '1'], ['Коэфф. стока', '0.50'], ['Макс. величина присое...', '2.00 л/с'], ['Объемный расход: пост...', '0.00 л/с'], ['Объемный расход: расх...', '0.99 л/с'], ['Объемный расход: расх...', '0.00 л/с'], ['Объемный расход: расх...', '0.00 л/с'], ['Объемный расход: расч...', '2.00 л/с'], ['Площадь осадков', '0.00 м2'], ['Присоед. мощность', '3.90 л/с'], ['Расчётн. интенс-ть вып...', '0.00 л/(с га)'], ['Скорость потока', '0.00 м/с']] },
  { t: 'Модель – ID', rows: [['Data Exchange ID', '3vXPp1NRZY7cGdJl7c3...', 1], ['IFC Guid', '3vXPp1NRZY7cGdJl7c3...'], ['IFC параметр элемента ...', 'Трубопровод - прос...', 3], ['IFC параметр элемента ...', 'Трубопровод - простая ...'], ['MepClass', '-', 4]] }
];

const Props = () => (
  <PropGrid>
    {GROUPS.map(g => (
      <React.Fragment key={g.t}>
        <GroupHead><Toggle />{g.t}</GroupHead>
        {g.rows.map((r, i) => (
          <PRow key={i}>
            <PLabel $dark={r[2] === 1 || r[2] === 4} $sel={r[2] === 2} $tight={r[0].length >= 21}>{r[0]}</PLabel>
            {r[2] === 2
              ? <PValue><SelText>{r[1]}</SelText><SelCaret /></PValue>
              : <PValue $bold={r[2] === 3} $bad={r[2] === 4}>{r[1]}</PValue>}
          </PRow>
        ))}
      </React.Fragment>
    ))}
  </PropGrid>
);

const Status = () => (
  <StGroups>
    <StGroup><StSlot $w={52}>МОДЕЛЬ</StSlot></StGroup>
    <StGroup>
      <StSlot $w={20}><Ic n="grid" s={14} /></StSlot><StSlot $w={26}><Ic n="snap" s={14} /></StSlot><StSlot $w={11}><Caret /></StSlot>
    </StGroup>
    <StGroup>
      <StSlot $w={4} /><StSlot $w={20} $on><Ic n="ortho" s={15} /></StSlot>
      <StSlot $w={18}><Ic n="polar" s={15} /></StSlot><StSlot $w={22}><Caret /></StSlot>
      <StSlot $w={16}><Ic n="osnap" s={15} /></StSlot><StSlot $w={20}><Caret /></StSlot>
      <StSlot $w={19} $on><Ic n="angle" s={15} /></StSlot><StSlot $w={3} />
      <StSlot $w={21} $on><Ic n="rectdot" s={15} /></StSlot><StSlot $w={14}><Caret /></StSlot>
    </StGroup>
    <StGroup><StSlot $w={22}><Ic n="lwt" s={15} /></StSlot></StGroup>
    <StGroup>
      <StSlot $w={21} $on><Ic n="anno" s={15} /></StSlot>
      <StSlot $w={22}><Ic n="anno2" s={15} /></StSlot>
      <StSlot $w={22}><Ic n="anno3" s={15} /></StSlot>
      <StSlot $w={18}>1:1</StSlot>
      <StSlot $w={15}><Caret /></StSlot>
    </StGroup>
    <StGroup>
      <StSlot $w={22}><Ic n="gear" s={15} /></StSlot><StSlot $w={14}><Caret /></StSlot><StSlot $w={28}><Ic n="plus" s={15} /></StSlot>
    </StGroup>
    <StGroup><StSlot $w={20}><Ic n="iso" s={15} /></StSlot></StGroup>
    <StGroup><StSlot $w={26}><Ic n="sheetok" s={16} /></StSlot><StSlot $w={25}><Ic n="sheetwarn" s={16} /></StSlot></StGroup>
    <StGroup><StSlot $w={23}><Ic n="frame" s={16} /></StSlot></StGroup>
    <StGroup><StSlot $w={26}><Ic n="burger" s={15} /></StSlot></StGroup>
  </StGroups>
);

export default function App() {
  return (
    <Shell>
      <GlobalStyle />
      <TitleBar>
        <QatGroup>
          <Logo>A</Logo>
          <QatSlot $w={14}><Caret /></QatSlot>
          {QAT.map(([n, w]) => <QatSlot key={n} $w={w}><Ic n={n} s={15} /></QatSlot>)}
          <QatSlot $w={2}><Caret /></QatSlot>
          <QatSlot $w={30}><Ic n="redo" s={15} c="#bbb" /></QatSlot>
          <QatSlot $w={4}><Caret $c="#aaa" /></QatSlot>
          <QatSlot $w={22}><Ic n="caretbar" s={13} /></QatSlot>
          <QatSlot $w={16}><Ic n="plane" s={16} /></QatSlot>
          <ShareLink>Общий доступ</ShareLink>
        </QatGroup>
        <DocTitle>LINEAR CAD 25    AW-04_DIN1986-100_Site_drainage_system_SC.dwg</DocTitle>
        <QatSlot $w={8}><Tri /></QatSlot>
        <SearchBox>Введите ключевое слово/фразу</SearchBox>
        <QatSlot $w={24}><Ic n="search" s={14} /></QatSlot>
        <QatSlot $w={22}><Ic n="user" s={16} /></QatSlot>
        <UserName>e-L04</UserName>
        <QatSlot $w={4}><Caret /></QatSlot>
        <QatSlot $w={32}><Ic n="cart" s={15} /></QatSlot>
        <QatSlot $w={14}><Ic n="a360" s={16} /></QatSlot>
        <QatSlot $w={14}><Caret /></QatSlot>
        <QatSlot $w={4} />
        <VBar />
        <QatSlot $w={8} />
        <Ic n="help" s={16} />
        <QatSlot $w={14}><Caret /></QatSlot>
        <QatSlot $w={73} />
        <Ic n="winmin" s={12} />
        <QatSlot $w={30} />
        <Ic n="winres" s={12} />
        <QatSlot $w={30} />
        <Ic n="winclose" s={12} />
      </TitleBar>
      <TabRow>
        {TABS.map(([t, w], i) => <RibbonTab key={t} $w={w} $on={i === 0}>{t}</RibbonTab>)}
        <QatSlot $w={22}><Ic n="tabbox" s={15} /></QatSlot>
        <QatSlot $w={4}><Caret /></QatSlot>
      </TabRow>
      <Ribbons />
      <DocBar>
        <BarSlot $w={44}><Ic n="burger" s={15} /></BarSlot>
        <SlashMark />
        <StartTab>Начало</StartTab>
        <ActiveDoc><span>AW-04_DIN1986-100...ainage_system_SC*</span><Ic n="xbold" s={9} /></ActiveDoc>
        <BarSlot $w={28}><Ic n="plus" s={15} /></BarSlot>
        <SlashMark />
      </DocBar>
      <Main>
        <LeftPanel>
          <DragHead><Grip /></DragHead>
          <FilterRow $h={32}><FilterLabel $w={242}>Все данные</FilterLabel><Caret /><FilterIcon><Ic n="tech" s={16} /></FilterIcon></FilterRow>
          <FilterRow $h={14} $fs={9.9}><FilterLabel $w={277}>Трубы и воздуховоды/Трубопровод – простая линия (1)</FilterLabel><Caret /></FilterRow>
          <FilterRow $h={7} />
          <GridWrap>
            <Props />
            <ScrollTrack><ScrollThumb /><Chevron $up /><Chevron /></ScrollTrack>
          </GridWrap>
          <Desc><DescTitle>Тип трубопровода</DescTitle>LIN_WW_TYPE_NAME_SETTING</Desc>
          <BlackBar />
        </LeftPanel>
        <Canvas>
          <DrainDrawing />
          <ViewLabel>[−][Сверху][2D-каркас]</ViewLabel>
          <WinCtrls><Ic n="cvmin" s={14} /><Ic n="cvres" s={13} /><Ic n="cvclose" s={13} /></WinCtrls>
          <ViewCube />
          <NavBar>
            <Faint><Ic n="wheel" s={24} /></Faint>
            <Faint><Ic n="hand" s={24} /></Faint>
            <Faint><Ic n="zoomx" s={22} /></Faint>
            <Faint><Ic n="orbit" s={24} /></Faint>
            <Faint><Ic n="boxes" s={20} /></Faint>
          </NavBar>
          <CmdLine>
            <CmdHandle><Grip /><Ic n="xbold" s={9} /><Ic n="wrench" s={14} /></CmdHandle>
            <CmdPrompt><Ic n="prompt" s={14} /><Caret /></CmdPrompt>
            <CmdText>Введите  команду</CmdText>
            <CmdUp />
          </CmdLine>
        </Canvas>
        <RightPanel>
          <RHead>
            <RTitle><Ic n="brand" s={13} />Канализация, 2D Схема</RTitle>
            <RTabs>
              <RTab $w={44}><Ic n="burger" s={22} /></RTab>
              <RTab $w={43}><Ic n="edit" s={22} /></RTab>
              <RTab $w={44} $on><Ic n="calc" s={22} /></RTab>
              <RTab $w={43}><Ic n="file" s={22} /></RTab>
              <RTab $w={44}><Ic n="dots" s={22} /></RTab>
            </RTabs>
          </RHead>
          <RBody>
            <RHeading>Анализ</RHeading>
            <RBox>
              <RItem><Ic n="calc" s={13} />Расчёт ...</RItem>
              <RItem><Ic n="hex" s={13} />Маркировка ...</RItem>
              <RItem><Ic n="viz" s={13} />Визуализация ...</RItem>
              <RItem><Ic n="export" s={13} />Вывод данных ...</RItem>
              <RSep />
              <RItem><Ic n="gear" s={13} />Настройки ...</RItem>
              <RItem><Ic n="list" s={13} />Данные материала<RCollapse><FaCaretUp size={11} /></RCollapse></RItem>
              <RSub $pt={2} $pb={0}>
                <RItem $sub><Ic n="pipe" s={13} />Трубы и изоляция ...</RItem>
                <RItem $sub><Ic n="addmat" s={13} />Дополнительный материал ...</RItem>
              </RSub>
              <RItem $gap={3}><Ic n="units" s={13} />Единицы пользования ...</RItem>
              <RItem><Ic n="loc" s={13} />Локализация ...</RItem>
              <RItem><Ic n="cube" s={13} />Элементы<RCollapse><FaCaretUp size={11} /></RCollapse></RItem>
              <RSub $pt={4.5} $pb={6}>
                <RItem $sub><Ic n="classify" s={13} />Классифицировать ...</RItem>
                <RItem $sub><Ic n="tech" s={13} />Технические данные ...</RItem>
                <RItem $sub $gap={1}><Ic n="copyb" s={13} />Копировать  &lt;</RItem>
                <RCheck $mt={1.5}><CheckBox $on />Данные элемента</RCheck>
                <RCheck><CheckBox />Длины</RCheck>
                <RCheck><CheckBox $on />для всех элементов</RCheck>
                <RItem $sub $gap={3}><Ic n="restore" s={13} />Восстановить  &lt;</RItem>
                <RCheck $mt={1}><CheckBox $on />Данные элемента</RCheck>
                <RCheck><CheckBox $on />Длины</RCheck>
                <RCheck><CheckBox $on />для всех элементов</RCheck>
              </RSub>
            </RBox>
            <RFoot>
              <Ic n="panelL" s={15} />
              <QatSlot $w={7} /><Ic n="layersFlash" s={15} />
              <QatSlot $w={7} /><Ic n="filter" s={15} />
              <QatSlot $w={29} /><Ic n="warnlist" s={15} />
              <QatSlot $w={7} /><Ic n="warn" s={15} />
              <QatSlot $w={15} /><Ic n="gear" s={15} />
              <QatSlot $w={7} /><Ic n="q" s={15} />
              <QatSlot $w={7} /><Ic n="info" s={15} />
            </RFoot>
          </RBody>
        </RightPanel>
      </Main>
      <StatusBar>
        <ModelTabs>
          <BarSlot $w={44}><Ic n="burger" s={15} /></BarSlot>
          <ActiveModel><span>Модель</span></ActiveModel>
          <LayoutTab>Layout1</LayoutTab>
          <SlashMark />
          <BarSlot $w={38}><Ic n="plus" s={15} /></BarSlot>
          <SlashMark />
        </ModelTabs>
        <Status />
      </StatusBar>
    </Shell>
  );
}
